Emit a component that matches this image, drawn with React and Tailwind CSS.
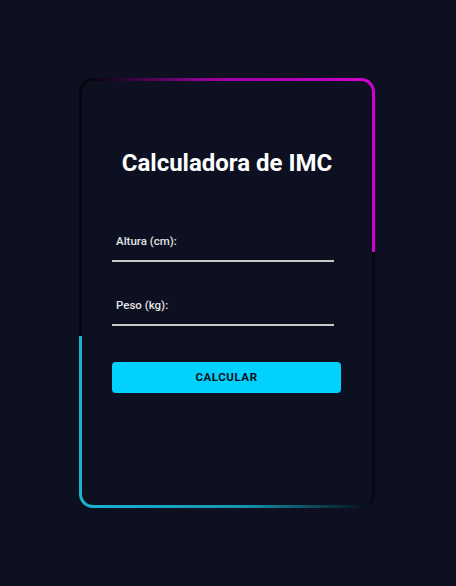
import React, { useState } from 'react';

export default function App() {
  const [altura, setAltura] = useState('');
  const [peso, setPeso] = useState('');

  return (
    <div className="min-h-[586px] w-full bg-[#0c1021] flex items-center justify-center font-['Roboto',sans-serif]">
      <div className="w-[296px] h-[430px] rounded-[14px] p-[3px] -translate-x-[1px] [background:linear-gradient(to_right,#07070d_5%,#9a009e_45%,#d200d2)_top/100%_40.5%_no-repeat,linear-gradient(to_right,#18b4d2,#1696b2_55%,#07070d)_bottom/100%_40%_no-repeat,#07070d]">
        <div className="h-full rounded-[11px] bg-[#0c1021] px-[30px] pt-[67px]">
          <h1 className="text-center text-[24px] leading-[30px] font-bold text-white">Calculadora de IMC</h1>

          <form className="mt-[55px]" onSubmit={(e) => e.preventDefault()}>
            <label className="block">
              <span className="block pl-[4px] text-[11.5px] leading-[16px] font-medium text-[#e4e4e4]">Altura (cm):</span>
              <input
                type="number"
                value={altura}
                onChange={(e) => setAltura(e.target.value)}
                className="block w-[222px] h-[13px] bg-transparent border-b-2 border-[#c9c9c9] text-white text-[12px] outline-none"
              />
            </label>

            <label className="block mt-[35px]">
              <span className="block pl-[4px] text-[11.5px] leading-[16px] font-medium text-[#e4e4e4]">Peso (kg):</span>
              <input
                type="number"
                value={peso}
                onChange={(e) => setPeso(e.target.value)}
                className="block w-[222px] h-[13px] bg-transparent border-b-2 border-[#c9c9c9] text-white text-[12px] outline-none"
              />
            </label>

            <button
              type="submit"
              className="mt-[36px] w-[229px] h-[31px] rounded-[4px] bg-[#00d2fd] text-[#0c1021] text-[11.5px] font-bold tracking-[0.05em]"
            >
              CALCULAR
            </button>
          </form>
        </div>
      </div>
    </div>
  );
}
